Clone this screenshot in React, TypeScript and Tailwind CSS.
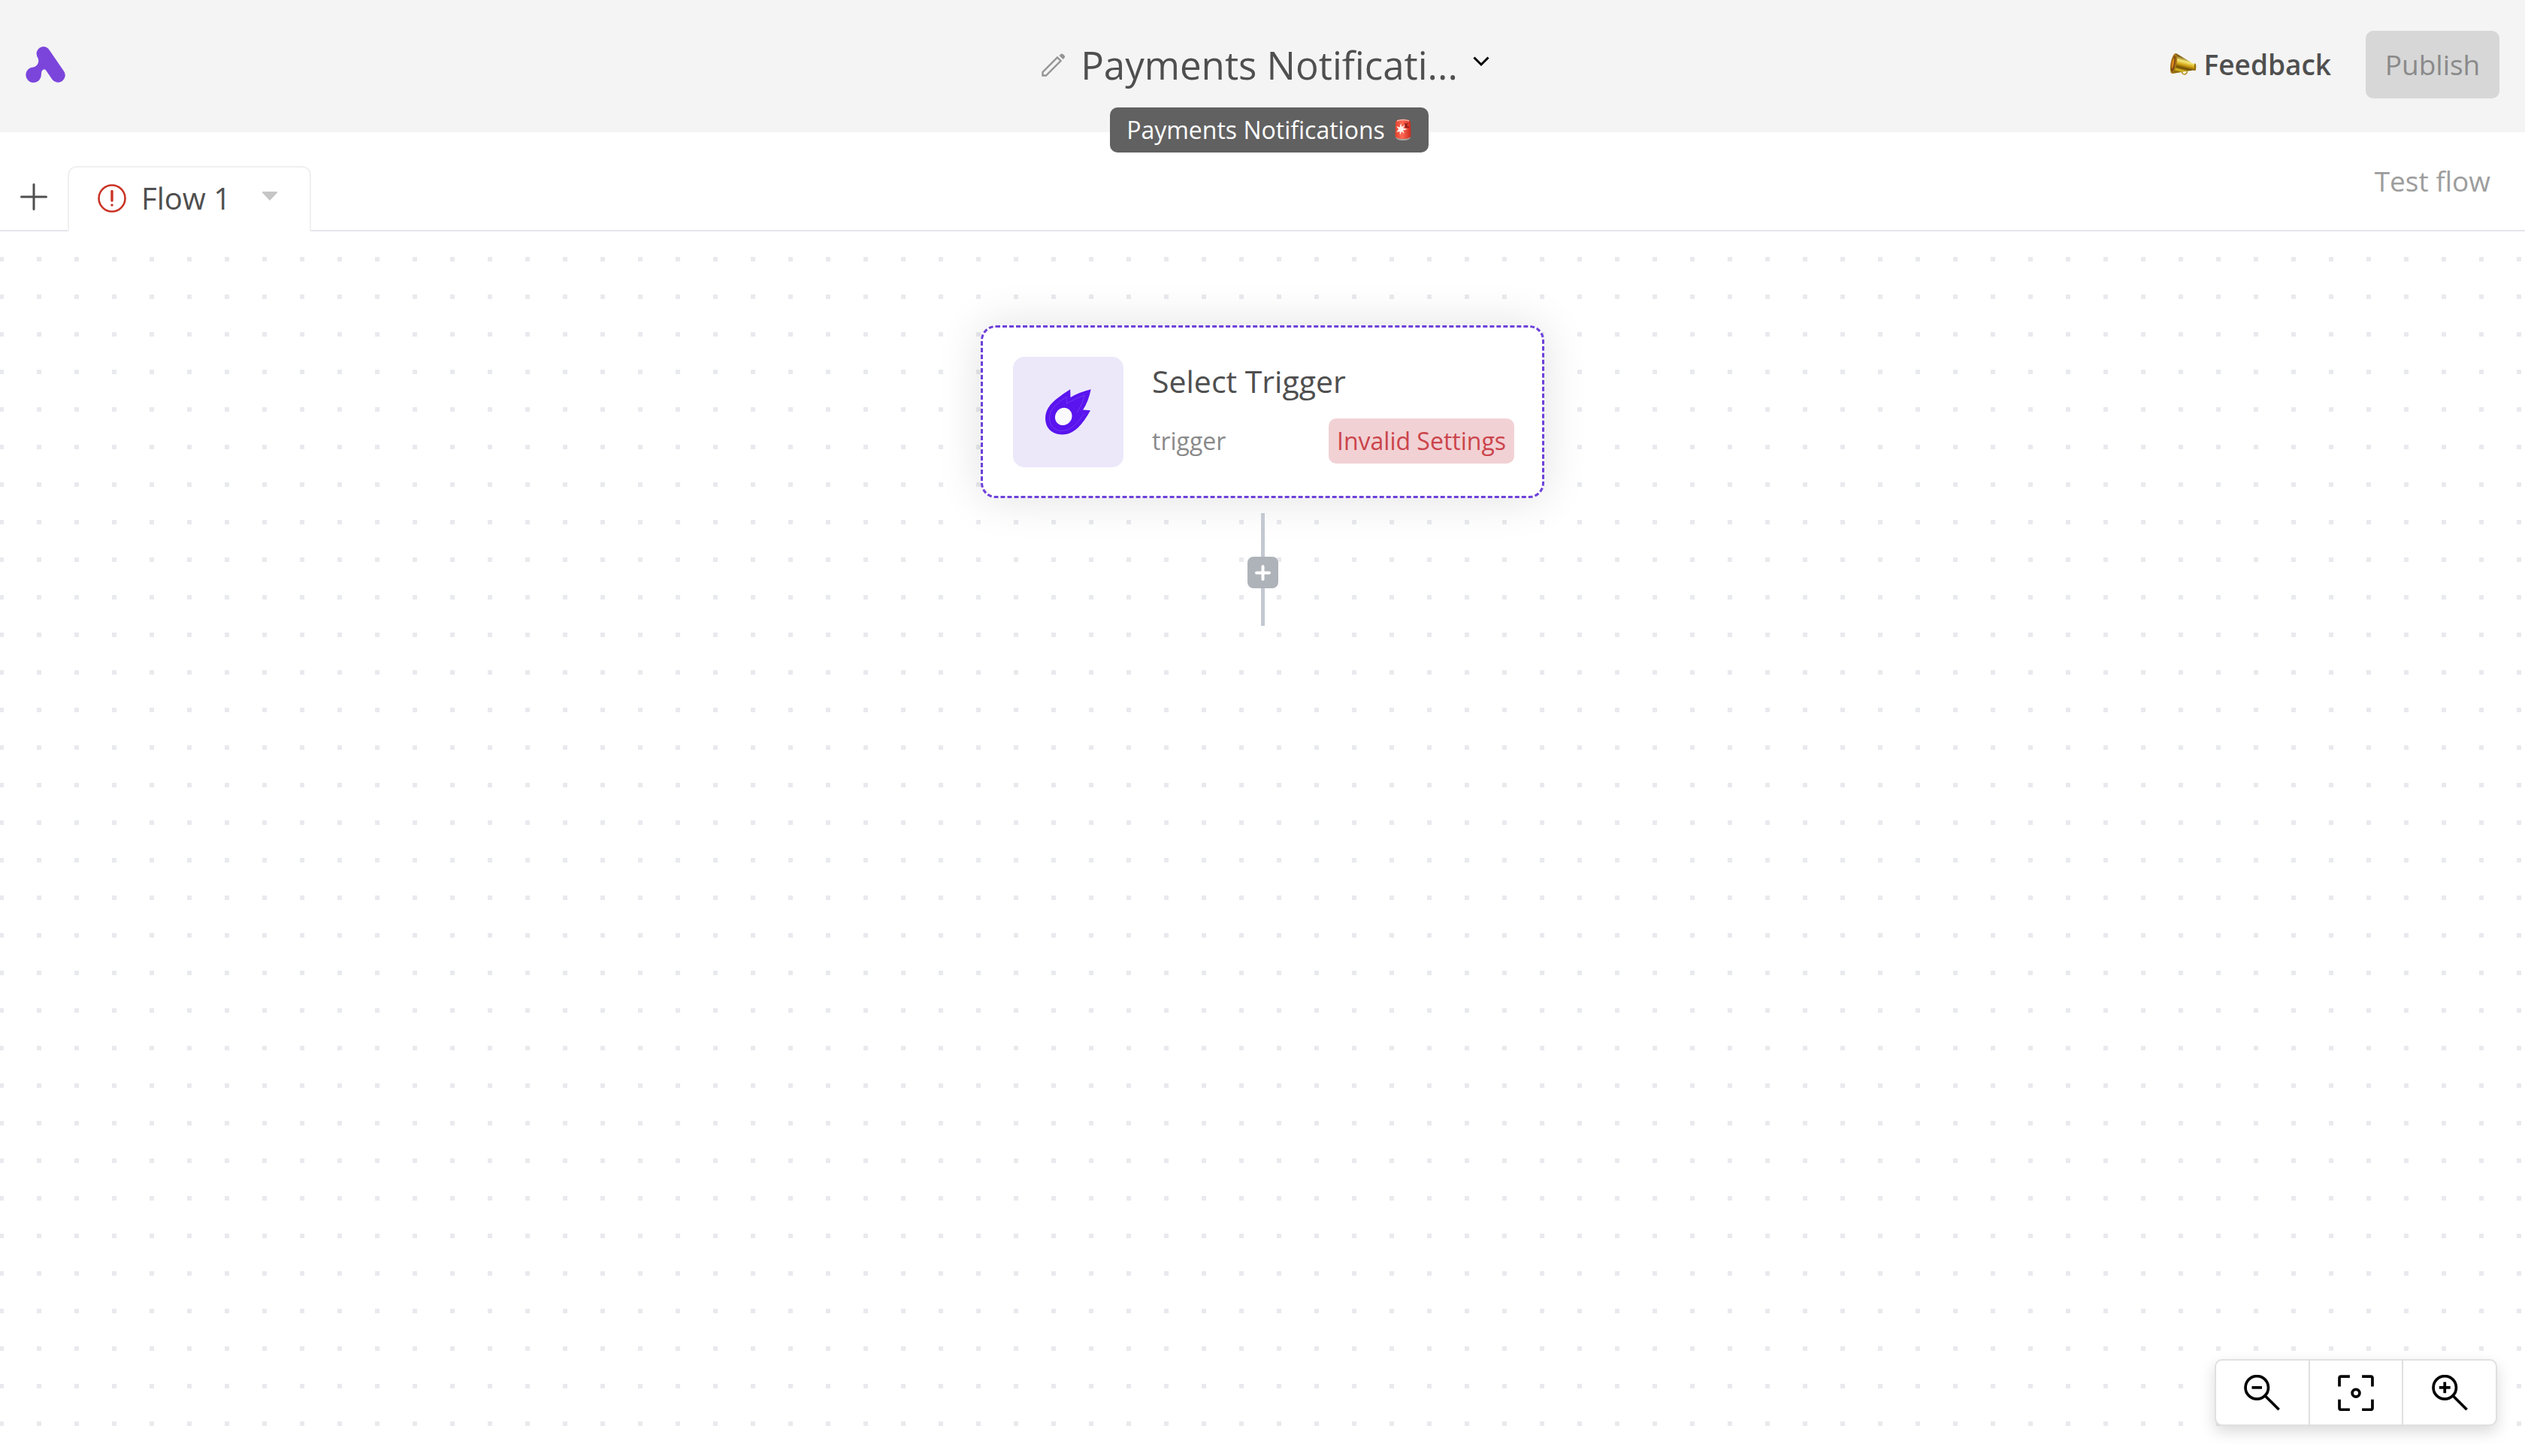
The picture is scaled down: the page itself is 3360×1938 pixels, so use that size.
import type { ReactNode } from "react";

function Logo() {
  return (
    <svg viewBox="99 185 160 145" className="h-12 w-[53px]" aria-hidden="true">
      <path
        fill="#7b45dc"
        d="M143 214A28 28 0 0 1 195 199L253 284A28 28 0 0 1 206 317L183 283Q174 270 164 284Q162 290 162 298A31 31 0 1 1 128 268C146 266 154 248 150 234Q143 223 143 214Z"
      />
    </svg>
  );
}

function Pencil() {
  return (
    <svg viewBox="0 0 32 32" className="h-8 w-8" fill="none" aria-hidden="true">
      <path d="M1.500 30.500V26L21 6.500L25.500 11L6 30.500Z" stroke="#949494" strokeWidth="2.400" />
      <path d="M23.500 4L25.500 2Q27 0.800 28.500 2L30.500 4Q31.800 5.500 30.500 7L28.500 9Z" fill="#949494" />
    </svg>
  );
}

function Siren() {
  return (
    <svg viewBox="0 0 24 32" className="h-8 w-6" role="img" aria-label="siren">
      <defs>
        <linearGradient id="siren-glass" x1="0" x2="1">
          <stop offset="0" stopColor="#e2402c" />
          <stop offset="0.45" stopColor="#ff6a55" />
          <stop offset="1" stopColor="#c9281b" />
        </linearGradient>
      </defs>
      <path d="M2 24H22Q22 30 12 30Q2 30 2 24Z" fill="#a5a5a0" />
      <path d="M4 3Q12 0.500 20 3Q22 4 22 7L22.500 24Q21 28 12 28Q3 28 1.500 24L2 7Q2 4 4 3Z" fill="url(#siren-glass)" />
      <path d="M4 4Q12 1 20 4" stroke="#f7b9aa" strokeWidth="1.500" fill="none" />
      <path d="M14 7Q17 9 19 6L17 10L21 13L15 13Z" fill="#8e1d18" />
      <path d="M9 7L10.500 12L15 9L12 13.500L18 15L12 16.500L14 21L10 18L8 23L7.500 18L3 19L6 15L3 11L7.500 12.500Z" fill="#fff1ec" />
    </svg>
  );
}

function Megaphone() {
  return (
    <svg viewBox="0 0 36 32" className="h-8 w-9" aria-hidden="true">
      <defs>
        <linearGradient id="horn" gradientUnits="userSpaceOnUse" x1="22" y1="7" x2="17" y2="27">
          <stop offset="0" stopColor="#7d5c10" />
          <stop offset="0.250" stopColor="#f6ea7a" />
          <stop offset="0.480" stopColor="#d2a414" />
          <stop offset="0.700" stopColor="#6a4a05" />
          <stop offset="0.880" stopColor="#e0c022" />
          <stop offset="1" stopColor="#8a6a0c" />
        </linearGradient>
      </defs>
      <path d="M16 24Q16.500 29 20 29Q23.500 28.500 23.500 24" stroke="#b8901c" strokeWidth="1.600" fill="none" />
      <path d="M8.500 0.800L31 14.500L34 14.500Q35.500 19 34 24L31 23.500L4 28Z" fill="url(#horn)" />
      <ellipse cx="5.500" cy="14.500" rx="4" ry="13.800" fill="#a8761a" transform="rotate(10 5.500 14.500)" />
      <ellipse cx="5" cy="15" rx="2.400" ry="11" fill="#7c4a10" transform="rotate(10 5 15)" />
      <ellipse cx="4.500" cy="14" rx="1.300" ry="7" fill="#e08a1e" transform="rotate(10 4.500 14)" />
      <ellipse cx="34" cy="19.300" rx="1.300" ry="4.700" fill="#9a7410" />
    </svg>
  );
}

function Comet() {
  return (
    <svg viewBox="213 204 184 184" className="h-[61px] w-[61px]" aria-hidden="true">
      <path
        fill="#5a14ee"
        d="M313 205L314 237Q350 216 396 205Q386 255 364 287L394 289Q372 330 345 358C318 384 292 388 272 386C235 383 213 356 213 322C213 285 235 262 260 242Q285 222 313 205Z"
      />
      <path
        d="M340 299Q363 263 371 229Q340 238 299 262L298 235Q270 250 248 275Q230 292 230 322C230 350 250 369 276 371C315 372 340 342 369 303"
        fill="none"
        stroke="#8a5cf4"
        strokeWidth="1.500"
      />
      <ellipse cx="286" cy="314" rx="33" ry="36" fill="#fbfaff" transform="rotate(35 286 314)" />
    </svg>
  );
}

function Lens({ children }: { children: ReactNode }) {
  return (
    <svg viewBox="0 0 142 142" className="h-12 w-12" fill="none" stroke="#000" strokeWidth="11" aria-hidden="true">
      <circle cx="51" cy="50" r="45" />
      <path d="M83 82L138 137" />
      {children}
    </svg>
  );
}

function ZoomButton({ label, children }: { label: string; children: ReactNode }) {
  return (
    <button type="button" aria-label={label} className="flex flex-1 items-center justify-center">
      {children}
    </button>
  );
}

export default function App() {
  return (
    <div className="flex min-h-screen flex-col bg-white font-['Open_Sans',sans-serif] text-[#4f4f4f]">
      <header className="grid h-44 grid-cols-[1fr_auto_1fr] items-center bg-[#f4f4f4] px-[34px] pb-1">
        <a href="#home" aria-label="Home" className="justify-self-start">
          <Logo />
        </a>
        <div className="flex items-center pl-2">
          <button type="button" aria-label="Rename" className="mr-5">
            <Pencil />
          </button>
          <div className="relative">
            <h1 className="text-[51px] leading-[72px]">Payments Notificati...</h1>
            <div
              role="tooltip"
              className="absolute top-full left-1/2 z-10 mt-[21px] flex h-15 w-[424px] -translate-x-1/2 items-center justify-center gap-3 rounded-[10px] bg-[#616161] text-[32px] whitespace-nowrap text-white"
            >
              Payments Notifications
              <Siren />
            </div>
          </div>
          <button type="button" aria-label="Flow options" className="mb-2 ml-5">
            <svg viewBox="0 0 22 14" className="h-3.5 w-[22px]" fill="none" stroke="#000" strokeWidth="3" aria-hidden="true">
              <path d="M1.500 1.500L11 11L20.500 1.500" />
            </svg>
          </button>
        </div>
        <div className="flex items-center justify-self-end">
          <button type="button" className="mr-[46px] flex items-center gap-2.5 text-[37px] font-semibold">
            <Megaphone />
            Feedback
          </button>
          <button type="button" disabled className="h-[90px] w-[178px] rounded-[10px] bg-[#d7d7d7] text-[37px] text-[#8a8a8a]">
            Publish
          </button>
        </div>
      </header>

      <nav className="flex h-[132px] items-end border-b-2 border-[#e5e5ec]">
        <button type="button" aria-label="Add flow" className="flex h-[88px] w-[90px] items-center justify-center">
          <svg viewBox="0 0 36 36" className="h-9 w-9" stroke="#4f4f4f" strokeWidth="3" strokeLinecap="round" aria-hidden="true">
            <path d="M18 1.500V34.500M1.500 18H34.500" />
          </svg>
        </button>
        <div className="-mb-0.5 flex h-[87px] w-[324px] items-center rounded-t-[12px] border-2 border-b-0 border-[#f0f0f0] bg-white pb-1 pl-[38px]">
          <svg viewBox="0 0 38 38" className="mr-5 h-[38px] w-[38px]" fill="none" stroke="#c93424" aria-hidden="true">
            <circle cx="19" cy="19" r="17.500" strokeWidth="2.600" />
            <path d="M19 9.500V22" strokeWidth="3.400" strokeLinecap="round" />
            <circle cx="19" cy="28" r="1.700" fill="#c93424" stroke="none" />
          </svg>
          <button type="button" className="text-[40px] leading-[56px]">Flow 1</button>
          <button type="button" aria-label="Flow menu" className="mr-[43px] mb-1.5 ml-auto">
            <svg viewBox="0 0 20 12" className="h-3 w-5" aria-hidden="true">
              <path d="M0.500 0H19.500Q20.500 0.800 19.500 2L10 12L0.500 2Q-0.500 0.800 0.500 0Z" fill="#c6c6c6" />
            </svg>
          </button>
        </div>
        <button type="button" disabled className="mr-[46px] ml-auto self-center text-[37px] text-[#9d9d9d]">
          Test flow
        </button>
      </nav>

      <main className="relative flex flex-1 flex-col items-center bg-[conic-gradient(at_6px_6px,transparent_75%,#e9eaee_0)] bg-size-[50px_50px] bg-position-[-1px_34px] pt-[125px]">
        <button
          type="button"
          className="flex h-[230px] w-[750px] items-center rounded-[20px] border-3 border-dashed border-[#6e41d9] bg-white pr-[37px] pl-10 text-left shadow-[0_0_60px_rgba(0,0,0,0.12)]"
        >
          <span className="mr-[38px] flex h-[147px] w-[147px] items-center justify-center rounded-[15px] bg-[#ece8fa]">
            <Comet />
          </span>
          <span className="flex flex-1 flex-col gap-[22px]">
            <span className="text-[41px] leading-[56px]">Select Trigger</span>
            <span className="flex items-center justify-between">
              <span className="text-[32px] text-[#8a8a8a]">trigger</span>
              <span className="flex h-15 w-[247px] items-center justify-center rounded-[10px] bg-[#f1d1d4] text-[32px] text-[#cb444a]">
                Invalid Settings
              </span>
            </span>
          </span>
        </button>
        <div className="mt-5 flex flex-col items-center">
          <span className="h-[58px] w-[5px] bg-[#c3c8d2]" />
          <button type="button" aria-label="Add step" className="flex h-[42px] w-[41px] items-center justify-center rounded-lg bg-[#aeb3b9]">
            <svg viewBox="0 0 21 21" className="h-[21px] w-[21px]" stroke="#fff" strokeWidth="4" strokeLinecap="round" aria-hidden="true">
              <path d="M10.500 2V19M2 10.500H19" />
            </svg>
          </button>
          <span className="h-[50px] w-[5px] bg-[#c3c8d2]" />
        </div>
        <div className="absolute right-[37px] bottom-10 flex h-[89px] w-[376px] divide-x-2 divide-[#e0e0e0] rounded-[10px] border-2 border-[#e0e0e0] bg-white shadow-[0_8px_20px_rgba(0,0,0,0.15)]">
          <ZoomButton label="Zoom out">
            <Lens>
              <path d="M31 50H71" />
            </Lens>
          </ZoomButton>
          <ZoomButton label="Fit to screen">
            <svg viewBox="0 0 142 142" className="h-12 w-12" fill="none" stroke="#000" strokeWidth="11" aria-hidden="true">
              <path d="M6 46V13Q6 6 13 6H47M95 6H129Q136 6 136 13V46M136 97V130Q136 137 129 137H95M47 137H13Q6 137 6 130V97" />
              <circle cx="71" cy="71.500" r="14.500" />
            </svg>
          </ZoomButton>
          <ZoomButton label="Zoom in">
            <Lens>
              <path d="M29 50H73M51 28V72" />
            </Lens>
          </ZoomButton>
        </div>
      </main>
    </div>
  );
}
